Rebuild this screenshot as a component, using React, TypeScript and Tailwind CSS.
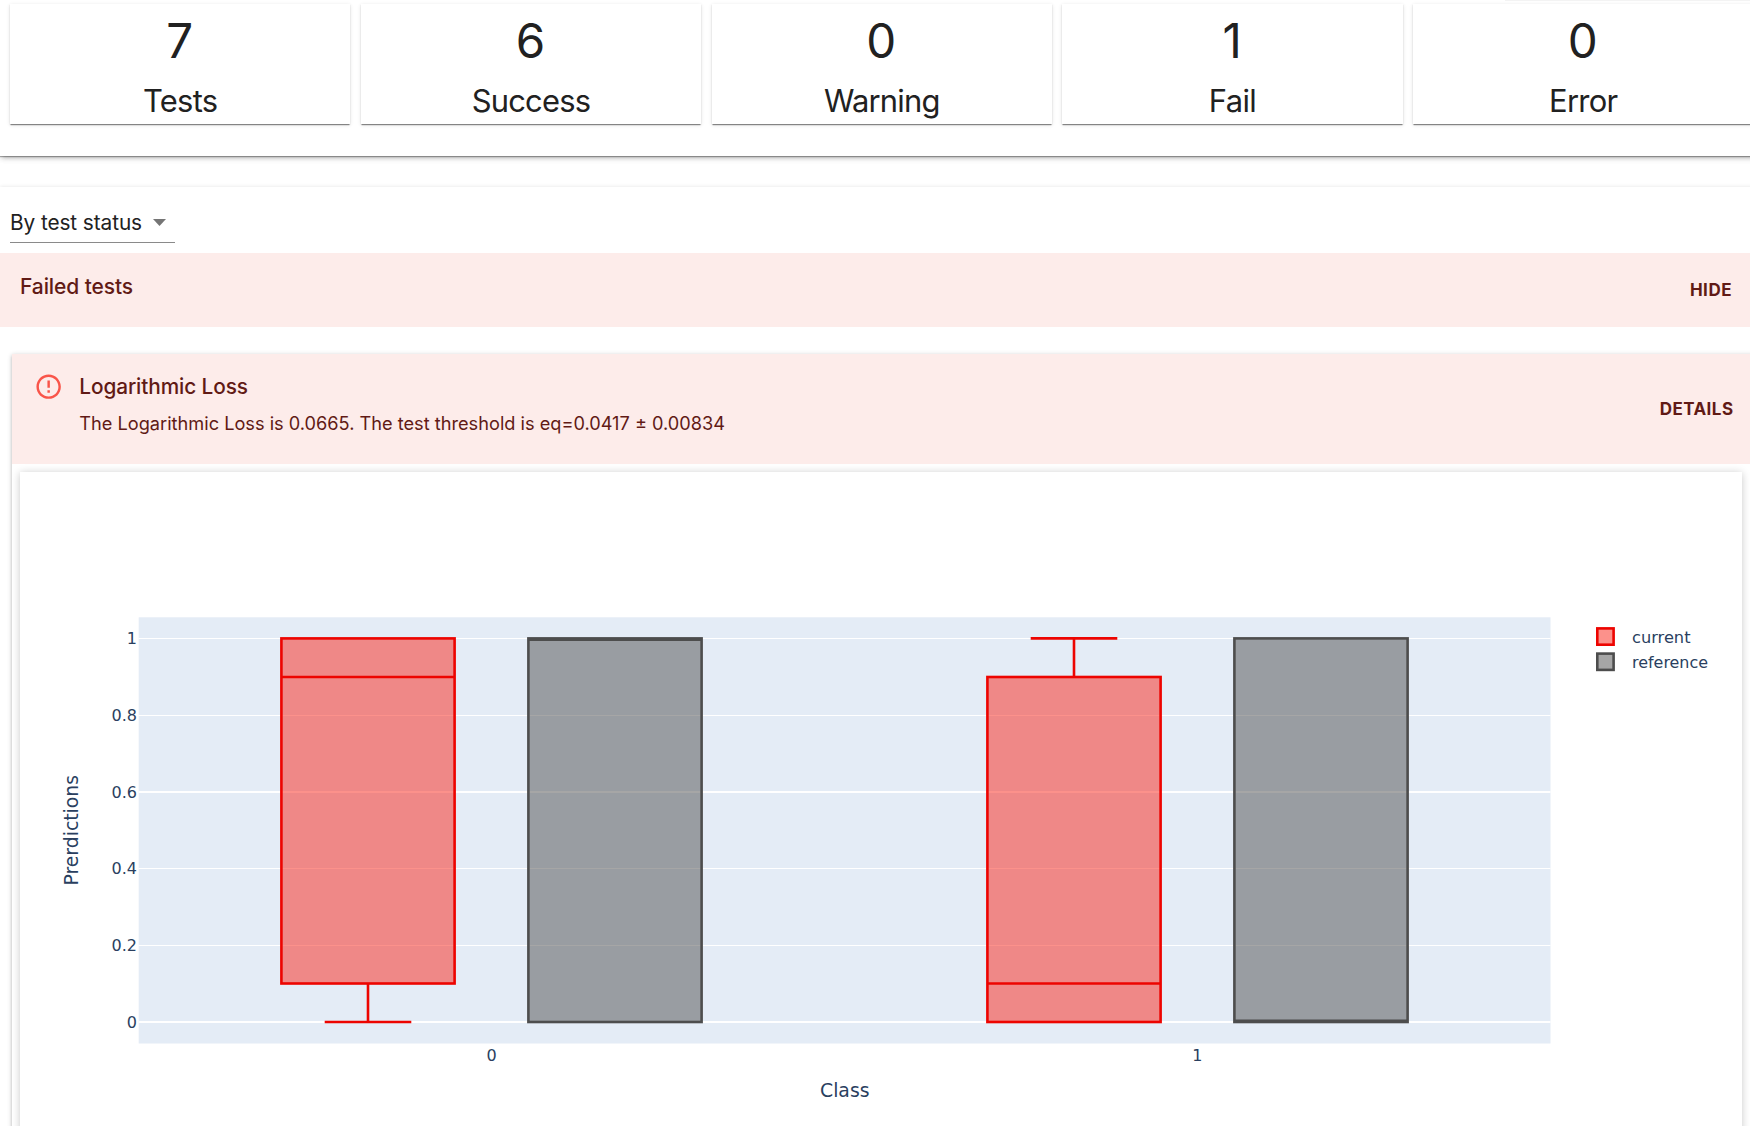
import React from "react";

const stats = [
  { value: "7", label: "Tests", cls: "tracking-[-0.7px]" },
  { value: "6", label: "Success", cls: "tracking-[-0.8px]" },
  { value: "0", label: "Warning", cls: "tracking-[-0.8px]" },
  { value: "1", label: "Fail", cls: "tracking-[-0.6px]" },
  { value: "0", label: "Error", cls: "tracking-[-0.7px]" },
];

const grid = [
  { label: "1", y: 638.5, w: 1, len: 8 },
  { label: "0.8", y: 715.5, w: 1, len: 25.5 },
  { label: "0.6", y: 792, w: 2, len: 25.5 },
  { label: "0.4", y: 868.5, w: 1, len: 25.5 },
  { label: "0.2", y: 945.5, w: 1, len: 25.5 },
  { label: "0", y: 1022, w: 2, len: 9.5 },
];

const RED = "#ed0400";
const RED_FILL = "rgba(250,36,24,0.5)";
const GREY = "#4d4d4d";
const GREY_FILL = "rgba(77,77,77,0.5)";

type BoxProps = {
  x: number;
  top: number;
  bottom: number;
  median: number;
  stroke: string;
  fill: string;
  whisker?: { from: number; to: number };
};

function Box({ x, top, bottom, median, stroke, fill, whisker }: BoxProps) {
  const w = 173.2;
  const mid = x + w / 2;
  return (
    <g stroke={stroke} strokeWidth={2.6} fill="none">
      <rect x={x} y={top} width={w} height={bottom - top} fill={fill} />
      <path d={`M${x} ${median}h${w}`} />
      {whisker && (
        <path d={`M${mid} ${whisker.from}V${whisker.to}M${mid - 43.3} ${whisker.to}h86.6`} />
      )}
    </g>
  );
}

function BoxPlot() {
  return (
    <svg
      className="block h-[654px] w-[1722px]"
      viewBox="20 472 1722 654"
      fill="#2a3f5f"
      fontFamily="'DejaVu Sans', Verdana, sans-serif"
      fontSize="16"
    >
      <rect x="138.7" y="617.3" width="1411.8" height="426.2" fill="#e4ecf6" />
      {grid.map((g) => (
        <g key={g.label}>
          <path d={`M138.7 ${g.y}H1550.5`} stroke="#fff" strokeWidth={g.w} />
          <text x={137} y={g.y + 5.7} textAnchor="end" textLength={g.len}>
            {g.label}
          </text>
        </g>
      ))}
      <Box x={281.4} top={638.4} bottom={983.5} median={677} stroke={RED} fill={RED_FILL} whisker={{ from: 983.5, to: 1022 }} />
      <Box x={528.4} top={638.4} bottom={1022} median={639.8} stroke={GREY} fill={GREY_FILL} />
      <Box x={987.4} top={677} bottom={1022} median={983.5} stroke={RED} fill={RED_FILL} whisker={{ from: 677, to: 638.4 }} />
      <Box x={1234.4} top={638.4} bottom={1022} median={1020.8} stroke={GREY} fill={GREY_FILL} />
      <text x="491.6" y="1061" textAnchor="middle">0</text>
      <text x="1197.4" y="1061" textAnchor="middle">1</text>
      <text x="820" y="1097.3" fontSize="18.7" textLength="49.5" lengthAdjust="spacingAndGlyphs">Class</text>
      <text transform="translate(78.3 885.5) rotate(-90)" fontSize="18.7" textLength="110.5" lengthAdjust="spacingAndGlyphs">
        Prerdictions
      </text>
      <rect x="1597.3" y="628.4" width="16.3" height="16.3" fill={RED_FILL} stroke={RED} strokeWidth="2.6" />
      <rect x="1597.3" y="653.6" width="16.3" height="16.3" fill={GREY_FILL} stroke={GREY} strokeWidth="2.6" />
      <text x="1632" y="643" textLength="58.5" lengthAdjust="spacingAndGlyphs">current</text>
      <text x="1632" y="668" textLength="76" lengthAdjust="spacingAndGlyphs">reference</text>
    </svg>
  );
}

export default function App() {
  return (
    <div className="h-[1126px] w-[1750px] overflow-hidden bg-white font-['Inter','Liberation_Sans',sans-serif] text-[#212121]">
      <section className="relative h-[156px] w-[1764px] pl-[10px] pt-1 shadow-[0_4px_4px_-3px_rgba(0,0,0,0.2),0_3px_5px_0_rgba(0,0,0,0.1),0_1px_8px_0_rgba(0,0,0,0.08),0_1px_1px_0_rgba(0,0,0,0.3)]">
        <div className="absolute left-[1505px] top-0 h-px w-[245px] bg-[#f3f3f3]" />
        <div className="flex gap-[10.4px]">
          {stats.map((s) => (
            <div
              key={s.label}
              className="flex h-[120px] w-[340.4px] shrink-0 flex-col items-center shadow-[0_2px_1px_-1px_rgba(0,0,0,0.3),0_1px_1px_0_rgba(0,0,0,0.2),0_1px_4px_0_rgba(0,0,0,0.12)]"
            >
              <div className="mt-1 h-[66px] pr-px text-[47.5px] leading-[66px]">{s.value}</div>
              <div className={`h-[50px] text-[30.9px] leading-[54px] ${s.cls}`}>{s.label}</div>
            </div>
          ))}
        </div>
      </section>

      <section className="mt-[31px] h-[960px] w-[1764px] shadow-[0_0_4px_0_rgba(0,0,0,0.11)]">
        <div className="flex h-[66px] items-start pl-[10px] pt-[13px]">
          <button className="flex h-[43px] w-[165px] items-center border-b border-[#8a8a8a] pt-[3px] text-[20.8px] leading-[28px]">
            <span className="w-[143px] whitespace-nowrap text-left tracking-[-0.08px]">By test status</span>
            <svg className="h-[7px] w-[13px]" viewBox="0 0 13 7" fill="#757575">
              <path d="M0 0h13L6.5 7z" />
            </svg>
          </button>
        </div>

        <div className="flex h-[74px] w-[1750px] justify-between bg-[#fdecea] pl-5 pr-[18px] text-[#611a15]">
          <h2 className="pt-5 text-[21px] font-medium leading-[28px] tracking-[-0.1px]">Failed tests</h2>
          <button className="h-[74px] pt-[2px] text-[17px] font-bold tracking-[0.5px]">HIDE</button>
        </div>

        <div className="ml-3 mt-[27px] h-[800px] w-[1752px] shadow-[0_3px_1px_-2px_rgba(0,0,0,0.2),0_2px_3px_0_rgba(0,0,0,0.14),0_1px_5px_0_rgba(0,0,0,0.2)]">
          <div className="flex h-[110px] w-[1738px] bg-[#fdecea] pl-[22px] pr-[16.5px] text-[#611a15]">
            <svg className="mt-[18px] size-[29.3px] shrink-0" viewBox="0 0 24 24" fill="#f9554a">
              <path d="M11 15h2v2h-2zm0-8h2v6h-2zm.99-5C6.47 2 2 6.48 2 12s4.47 10 9.99 10C17.52 22 22 17.52 22 12S17.52 2 11.99 2zM12 20c-4.42 0-8-3.58-8-8s3.58-8 8-8 8 3.58 8 8-3.58 8-8 8z" />
            </svg>
            <div className="ml-4 grow pt-[19px]">
              <h3 className="text-[20.8px] font-medium leading-[28px] tracking-[-0.1px]">Logarithmic Loss</h3>
              <p className="mt-[9px] text-[18.2px] leading-[26px]">
                The Logarithmic Loss is 0.0665. The test threshold is eq=0.0417 ± 0.00834
              </p>
            </div>
            <button className="h-[110px] pt-[2px] text-[17px] font-bold tracking-[0.45px]">DETAILS</button>
          </div>
          <div className="ml-2 mt-2 h-[700px] w-[1722px] bg-white shadow-[0_1px_8px_0_rgba(0,0,0,0.22)]">
            <BoxPlot />
          </div>
        </div>
      </section>
    </div>
  );
}
